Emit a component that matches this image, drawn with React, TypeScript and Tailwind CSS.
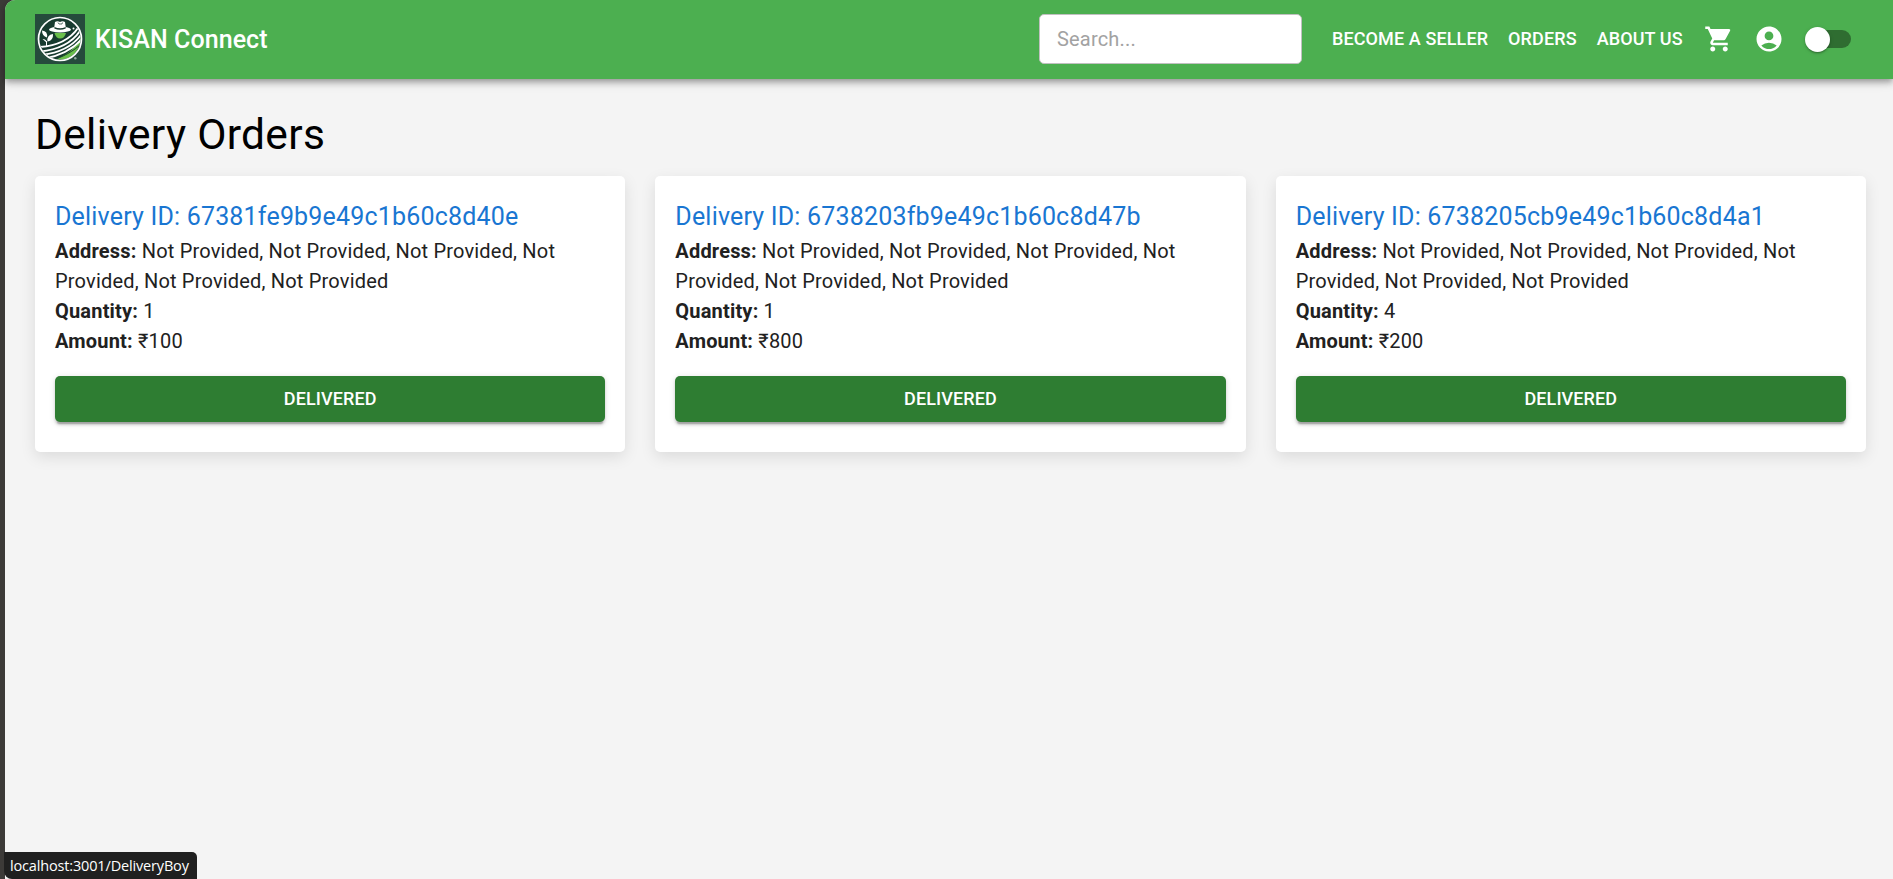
import { MdAccountCircle, MdShoppingCart } from "react-icons/md";

const orders = [
  { id: "67381fe9b9e49c1b60c8d40e", quantity: 1, amount: 100 },
  { id: "6738203fb9e49c1b60c8d47b", quantity: 1, amount: 800 },
  { id: "6738205cb9e49c1b60c8d4a1", quantity: 4, amount: 200 },
];

const address = "Not Provided, Not Provided, Not Provided, Not Provided, Not Provided, Not Provided";

function Logo() {
  return (
    <svg className="size-[50px] shrink-0" viewBox="0 0 50 50">
      <defs>
        <clipPath id="field">
          <circle cx="25" cy="25" r="20.5" />
        </clipPath>
      </defs>
      <rect width="50" height="50" fill="#254b3c" />
      <circle cx="25" cy="25" r="21.5" fill="#173b2f" />
      <g clipPath="url(#field)" fill="none">
        <path d="M16 47C30 42 41 36 47 20V47Z" fill="#6abf4b" />
        <g stroke="#fff" strokeWidth="1.9">
          <path d="M5 33C20 32 34 27 43 14" />
          <path d="M5 37.500C21 36 36 30 45 17" />
          <path d="M7 41C23 39 37 33 46 21" />
          <path d="M10 44.500C25 41.500 38 35 47 25" />
          <path d="M15 47C28 43 39 37 47 29" stroke="#173b2f" strokeWidth="1" />
        </g>
      </g>
      <circle cx="25" cy="25" r="21.500" fill="none" stroke="#fff" strokeWidth="1.700" />
      <path d="M19.500 19H31Q29.500 24.500 25.200 24.500Q21 24.500 19.500 19Z" fill="#6abf4b" />
      <ellipse cx="25" cy="15.500" rx="11" ry="3" fill="#fff" />
      <path d="M20 8Q22.500 6.500 25 8Q27.500 6.500 30 8L31 15Q25 17 19 15Z" fill="#fff" />
      <path d="M19.500 13Q25 15.500 30.700 13V14.500Q25 17 19.300 14.500Z" fill="#173b2f" />
      <path d="M23 8.500L24 10H27L27.500 8.500" fill="none" stroke="#173b2f" strokeWidth=".7" />
      <path d="M7 16.500Q13 17 12 23.500Q7 22 7 16.500ZM18 20Q11.500 21 12.500 27.500Q18.500 26.500 18 20ZM7.500 25Q11.500 25 12 29" fill="#fff" />
      <path d="M11.500 27V33" stroke="#fff" strokeWidth="1" />
      <circle cx="38.500" cy="14.500" r="1" fill="#fff" />
      <circle cx="40.300" cy="44.300" r="1.200" fill="#8fa69c" />
    </svg>
  );
}

function Header() {
  return (
    <header className="relative flex h-[79px] items-center rounded-tl-[10px] bg-[#4caf50] pb-px pl-[30px] text-white shadow-[0_2.5px_5px_-1.25px_rgba(0,0,0,0.2),0_5px_6.25px_0_rgba(0,0,0,0.14),0_1.25px_12.5px_0_rgba(0,0,0,0.12)]">
      <Logo />
      <div className="ml-[10px] grow pt-px text-[25px] leading-10 font-medium tracking-[0.003em]">KISAN Connect</div>
      <input
        className="h-[50px] w-[263px] shrink-0 rounded-[5px] border border-[#c0c0c0] bg-white px-[17px] text-[20px] tracking-[0.00938em] text-black outline-none placeholder:text-[#a2a2a2]"
        placeholder="Search..."
      />
      <nav className="ml-[30px] flex w-[352px] gap-5 pb-px text-[18px] font-medium tracking-[0.006em] whitespace-nowrap">
        <a>BECOME A SELLER</a>
        <a>ORDERS</a>
        <a>ABOUT US</a>
      </nav>
      <MdShoppingCart className="ml-[20px] size-[30px] shrink-0" />
      <MdAccountCircle className="ml-[20px] size-[30px] shrink-0" />
      <div className="mr-[42px] ml-[21px] flex h-[25px] w-[46px] shrink-0 items-center">
        <div className="relative size-[25px] shrink-0 rounded-full bg-white shadow-[0_2px_2px_-1px_rgba(0,0,0,0.2),0_1px_2px_rgba(0,0,0,0.14),0_1px_4px_rgba(0,0,0,0.12)]" />
        <div className="-ml-3 h-[18px] w-[33px] shrink-0 rounded-r-full bg-[#2f6d31]" />
      </div>
    </header>
  );
}

export default function App() {
  return (
    <div className="h-[879px] overflow-hidden bg-[#3c3a38] pl-[5px] font-[Roboto,sans-serif]">
      <div className="h-full rounded-tl-[10px] bg-[#f4f4f4]">
        <Header />
        <main className="pt-[29px] pr-[27px] pl-[30px]">
          <h1 className="h-[68px] pt-px text-[42.5px] leading-[52.5px] tracking-[0.00735em] text-black">Delivery Orders</h1>
          <div className="grid grid-cols-3 gap-[30px]">
            {orders.map((order) => (
              <section
                key={order.id}
                className="h-[276px] rounded-[5px] bg-white p-5 text-[20px] leading-[30px] tracking-[0.00938em] text-[#212121] shadow-[0_5px_15px_rgba(0,0,0,0.1)]"
              >
                <h2 className="h-10 pt-px text-[25px] leading-10 tracking-[0.0075em] text-[#1976d2]">Delivery ID: {order.id}</h2>
                <p><b>Address:</b> {address}</p>
                <p><b>Quantity:</b> {order.quantity}</p>
                <p><b>Amount:</b> ₹{order.amount}</p>
                <button className="mt-5 h-[46px] w-full rounded-[5px] bg-[#2e7d32] text-[18px] font-medium tracking-[0.006em] text-white shadow-[0_3.75px_1.25px_-2.5px_rgba(0,0,0,0.2),0_2.5px_2.5px_0_rgba(0,0,0,0.14),0_1.25px_6.25px_0_rgba(0,0,0,0.12)]">
                  DELIVERED
                </button>
              </section>
            ))}
          </div>
        </main>
      </div>
      <div className="absolute top-[852px] left-[4px] flex h-[27px] w-[193px] items-center rounded-tr-[5px] rounded-bl-[8px] bg-[#202020] pl-[6px] font-['Open_Sans',sans-serif] text-[14.5px] tracking-[-0.16px] whitespace-nowrap text-white">
        localhost:3001/DeliveryBoy
      </div>
    </div>
  );
}
